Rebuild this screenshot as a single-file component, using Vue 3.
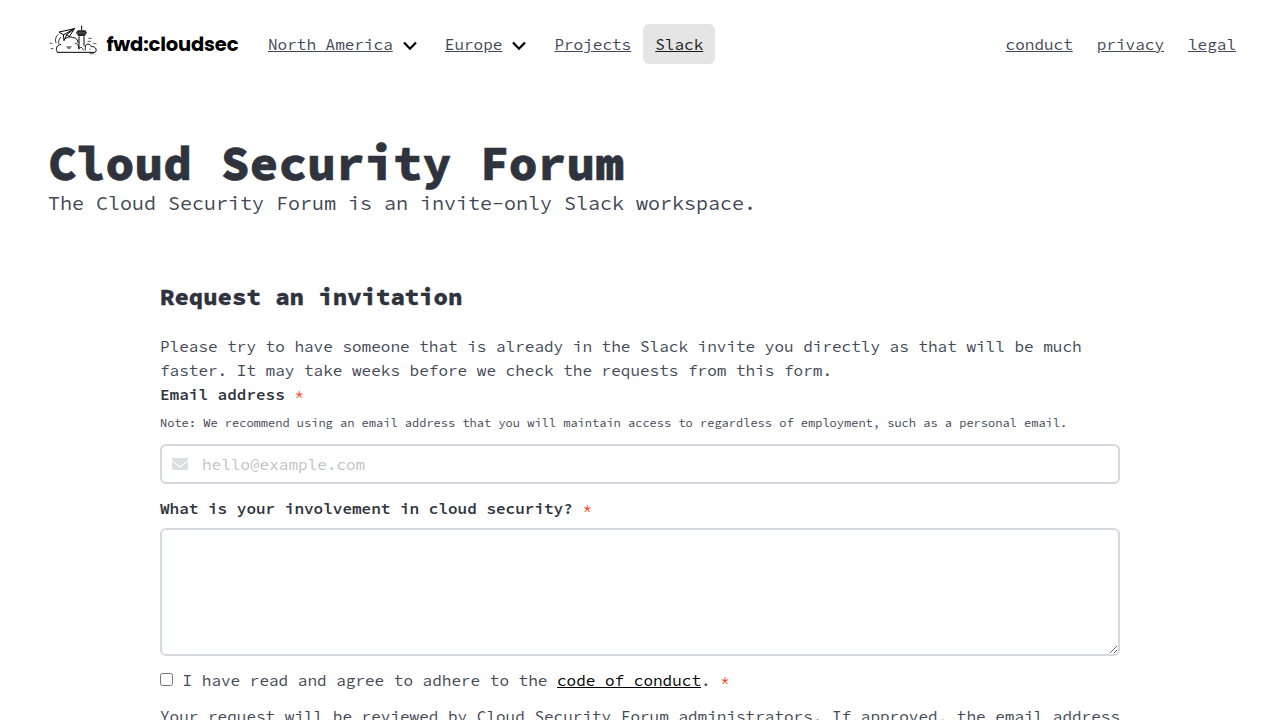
<template>
  <nav class="navbar">
    <a class="brand">
      <svg class="logo-mark" viewBox="12 18 156 96" aria-hidden="true">
        <g fill="none" stroke="#000" stroke-width="3" stroke-linejoin="round" stroke-linecap="round">
          <path d="M41 103 C34 98 35 82 50 79 M62 64 C70 56 80 55 86 59 C96 58 102 66 102 74" />
          <path d="M41 103 H153 C162 94 152 84 142 86 C138 76 127 76 124 84" />
          <path d="M46 42 L91 32 L76 56 L68 50 L60 68 L58 51 Z M91 32 L58 51 M91 32 L68 50" />
          <path d="M42 50 C34 58 33 66 36 74 M50 58 C44 64 43 72 44 76" stroke-width="2.5" />
          <path d="M105 56 V92 M120 56 V82 M113 24 V36" />
          <path d="M94 76 C101 77 103 82 104 90 M104 92 C110 86 116 87 118 96 M124 84 V96" stroke-width="2.5" />
          <path d="M18 76 H24 M21 92 H27 M134 61 H142 M132 70 H139 M149 77 H156 M138 107 H148" stroke-width="2" />
        </g>
        <path d="M96 44 L101 37 H124 L129 44 L122 54 H103 Z" fill="#222" />
        <path d="M100 45 H125" stroke="#888" stroke-width="2" />
        <path d="M66 85 H84 L78 93 H72 Z M134 92 H142 L138 96 Z" fill="#777" />
      </svg>
      <svg class="logo-text" viewBox="0 0 134 32">
        <text x="0.5" y="26.5" textLength="132" lengthAdjust="spacing">fwd:cloudsec</text>
      </svg>
    </a>
    <div class="nav-start">
      <a
        v-for="item in mainLinks"
        :key="item.label"
        class="nav-item"
        :class="{ dropdown: item.dropdown, active: item.active }"
        href="#"
      >
        <span>{{ item.label }}</span>
        <svg v-if="item.dropdown" class="chevron" viewBox="0 0 16 12">
          <path d="M2 2.5 L8 8.7 L14 2.5" />
        </svg>
      </a>
    </div>
    <div class="nav-end">
      <a v-for="label in sideLinks" :key="label" class="nav-item" href="#"><span>{{ label }}</span></a>
    </div>
  </nav>

  <header class="hero">
    <h1>Cloud Security Forum</h1>
    <p>The Cloud Security Forum is an invite-only Slack workspace.</p>
  </header>

  <main class="content">
    <h2>Request an invitation</h2>
    <p>
      Please try to have someone that is already in the Slack invite you directly as that will be much
      faster. It may take weeks before we check the requests from this form.
    </p>
    <form @submit.prevent>
      <label class="label" for="email">Email address <span class="required">*</span></label>
      <p class="note">
        Note: We recommend using an email address that you will maintain access to regardless of employment, such as a personal email.
      </p>
      <div class="control">
        <svg class="envelope" viewBox="0 0 512 384">
          <path d="M48 0C21.500 0 0 21.500 0 48c0 15.100 7.100 29.300 19.200 38.400L236.800 249.600c11.400 8.500 27 8.500 38.400 0L492.800 86.400C504.900 77.300 512 63.100 512 48c0-26.500-21.500-48-48-48H48zM0 112V320c0 35.300 28.700 64 64 64H448c35.300 0 64-28.700 64-64V112L294.400 275.200c-22.800 17.100-54 17.100-76.800 0L0 112z" />
        </svg>
        <input id="email" v-model="email" type="email" placeholder="hello@example.com" />
      </div>
      <label class="label" for="involvement">What is your involvement in cloud security? <span class="required">*</span></label>
      <textarea id="involvement" v-model="involvement"></textarea>
      <label class="agree">
        <input v-model="agreed" type="checkbox" />
        <span>I have read and agree to adhere to the <a href="#">code of conduct</a>. <span class="required">*</span></span>
      </label>
      <p class="review">
        Your request will be reviewed by Cloud Security Forum administrators. If approved, the email address
      </p>
    </form>
  </main>
</template>

<script setup>
import { ref } from 'vue';

const email = ref('');
const involvement = ref('');
const agreed = ref(false);

const mainLinks = [
  { label: 'North America', dropdown: true },
  { label: 'Europe', dropdown: true },
  { label: 'Projects' },
  { label: 'Slack', active: true }
];

const sideLinks = ['conduct', 'privacy', 'legal'];
</script>

<style>
html {
  overflow: hidden;
}

body {
  height: 720px;
  overflow: hidden;
  background: #fff;
  color: #434857;
  font-family: "Source Code Pro", "Liberation Mono", monospace;
  font-size: 16px;
  line-height: 24px;
}
</style>

<style scoped>
h1,
h2,
p {
  margin: 0;
}

.navbar {
  display: flex;
  align-items: center;
  height: 40px;
  padding: 24px 32px 0 48px;
}

.brand {
  display: flex;
  align-items: flex-start;
  width: 208px;
  height: 40px;
}

.logo-mark {
  width: 52px;
  height: 32px;
}

.logo-text {
  width: 134px;
  height: 32px;
  margin-left: 6px;
}

.logo-text text {
  font-family: Poppins, Montserrat, Inter, sans-serif;
  font-size: 19.5px;
  font-weight: 700;
  fill: #000;
}

.nav-start,
.nav-end {
  display: flex;
}

.nav-end {
  margin-left: auto;
}

.nav-item {
  display: flex;
  align-items: center;
  height: 40px;
  padding: 0 12px;
  border-radius: 6px;
  color: #434857;
  text-decoration: none;
}

.nav-item span {
  text-decoration: underline;
}

.chevron {
  width: 16px;
  height: 12px;
  margin: 3px 3px 0 9px;
}

.chevron path {
  fill: none;
  stroke: #000;
  stroke-width: 2.3;
}

.active {
  background: #e5e5e5;
  color: #1a1a1a;
}

.hero {
  padding: 72px 48px 0;
}

.hero h1 {
  margin-bottom: 1px;
  color: #2e333d;
  font-size: 48px;
  font-weight: 800;
  line-height: 54px;
  -webkit-text-stroke: 0.6px #2e333d;
}

.hero p {
  font-size: 20px;
  line-height: 24px;
}

.content {
  width: 960px;
  margin: 67px auto 0;
}

.content h2 {
  margin-bottom: 22px;
  color: #2e333d;
  font-size: 24px;
  font-weight: 800;
  line-height: 30px;
  -webkit-text-stroke: 0.3px #2e333d;
}

.label {
  display: block;
  color: #2e333d;
  font-weight: 600;
}

.required {
  color: #ff4314;
  font-weight: 400;
}

.note {
  margin: 8px 0 12px;
  font-size: 12px;
  line-height: 18px;
  white-space: nowrap;
}

.control {
  position: relative;
  display: flex;
  margin-bottom: 12px;
}

.control input,
textarea {
  box-sizing: border-box;
  width: 100%;
  margin: 0;
  border: 2px solid #d5d9e0;
  border-radius: 6px;
  background: #fff;
  color: #2e333d;
  font: inherit;
}

.control input {
  height: 40px;
  padding: 0 12px 0 40px;
}

.control input::placeholder {
  color: #c3c3c5;
}

.envelope {
  position: absolute;
  top: 14px;
  left: 12px;
  width: 16px;
  height: 12px;
  fill: #dbdfe5;
}

textarea {
  display: block;
  height: 128px;
  margin-top: 8px;
  resize: vertical;
}

.agree {
  display: flex;
  align-items: center;
  margin-top: 12px;
}

.agree input {
  width: 13px;
  height: 13px;
  margin: 0 9.6px 2px 0;
}

.agree a {
  color: #000;
}

.review {
  margin-top: 12px;
  white-space: nowrap;
}
</style>
